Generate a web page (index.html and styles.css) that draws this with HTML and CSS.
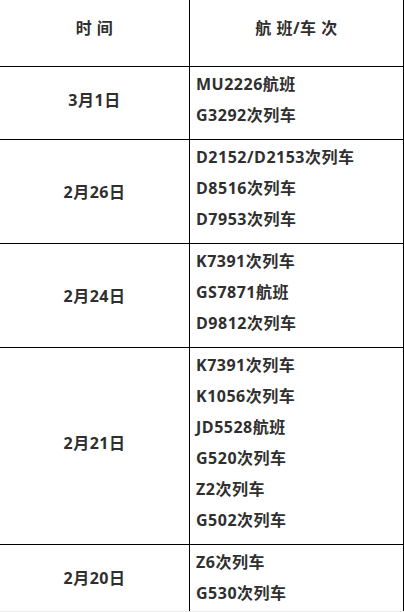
FILE: index.html
```html
<!DOCTYPE html>
<html lang="zh-CN">
<head>
<meta charset="utf-8">
<link rel="stylesheet" href="styles.css">
</head>
<body>
<div class="frame">
<table class="sched">
<colgroup><col class="c-date"><col class="c-num"></colgroup>
<thead>
<tr><th><p>时 间</p></th><th><p>航 班/车 次</p></th></tr>
</thead>
<tbody>
<tr><td class="date"><p class="lift">3月1日</p></td><td class="nums"><p>MU2226航班</p><p>G3292次列车</p></td></tr>
<tr><td class="date"><p>2月26日</p></td><td class="nums"><p>D2152/D2153次列车</p><p>D8516次列车</p><p>D7953次列车</p></td></tr>
<tr><td class="date"><p>2月24日</p></td><td class="nums"><p>K7391次列车</p><p>GS7871航班</p><p>D9812次列车</p></td></tr>
<tr><td class="date"><p class="lift">2月21日</p></td><td class="nums"><p>K7391次列车</p><p>K1056次列车</p><p>JD5528航班</p><p>G520次列车</p><p>Z2次列车</p><p>G502次列车</p></td></tr>
<tr><td class="date"><p class="lift">2月20日</p></td><td class="nums"><p>Z6次列车</p><p>G530次列车</p></td></tr>
</tbody>
</table>
</div>
</body>
</html>
```
FILE: styles.css
```css
html, body {
  margin: 0;
  padding: 0;
  background: #ffffff;
}
.frame {
  height: 611px;
  overflow: hidden;
  border-bottom: 1px solid #ececec;
}
.sched {
  border-collapse: collapse;
  table-layout: fixed;
  width: 404px;
  margin: -1px 0 0 -1px;
  font-family: "Open Sans", "Noto Sans CJK SC", sans-serif;
  font-weight: 700;
  font-size: 16px;
  letter-spacing: 0.5px;
  color: #2f2f2f;
}
.c-date { width: 190px; }
.c-num { width: 214px; }
.sched th, .sched td {
  border: 1px solid #000000;
  padding: 5px 6px 5px 6px;
  vertical-align: middle;
}
.sched th {
  padding: 16px 6px 26px 6px;
  text-align: center;
}
.sched p {
  margin: 0;
  line-height: 24px;
}
.sched td.date { text-align: center; }
.sched td.nums { text-align: left; }
.sched td.nums p { margin-bottom: 7px; }
.sched p.lift { margin-bottom: 7px; }
```
